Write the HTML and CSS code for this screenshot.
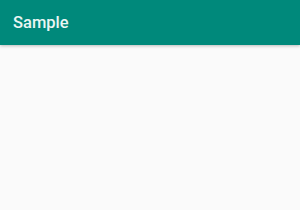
FILE: index.html
```html
<!DOCTYPE html>
<html lang="en">
<head>
    <meta charset="UTF-8">
    <title>Sample</title>
    <link rel="stylesheet" href="styles.css">
</head>
<body>
    <div class="toolbar">
        <h1 class="title">Sample</h1>
    </div>
    <div class="content"></div>
</body>
</html>
```

FILE: styles.css
```css
body {
    margin: 0;
    padding: 0;
    font-family: 'Roboto', 'Noto Sans', sans-serif;
    background-color: #fafafa;
    height: 210px;
    overflow: hidden;
}

/* Toolbar */
.toolbar {
    height: 45px;
    display: flex;
    align-items: center;
    padding: 0 13px;
    background-color: #00897b;
    box-shadow: 0 1px 3px rgba(0, 0, 0, 0.25);
}

.title {
    margin: 0;
    font-size: 16.5px;
    font-weight: 500;
    color: #eaf6f4;
}

.content {
    flex: 1;
}
```
